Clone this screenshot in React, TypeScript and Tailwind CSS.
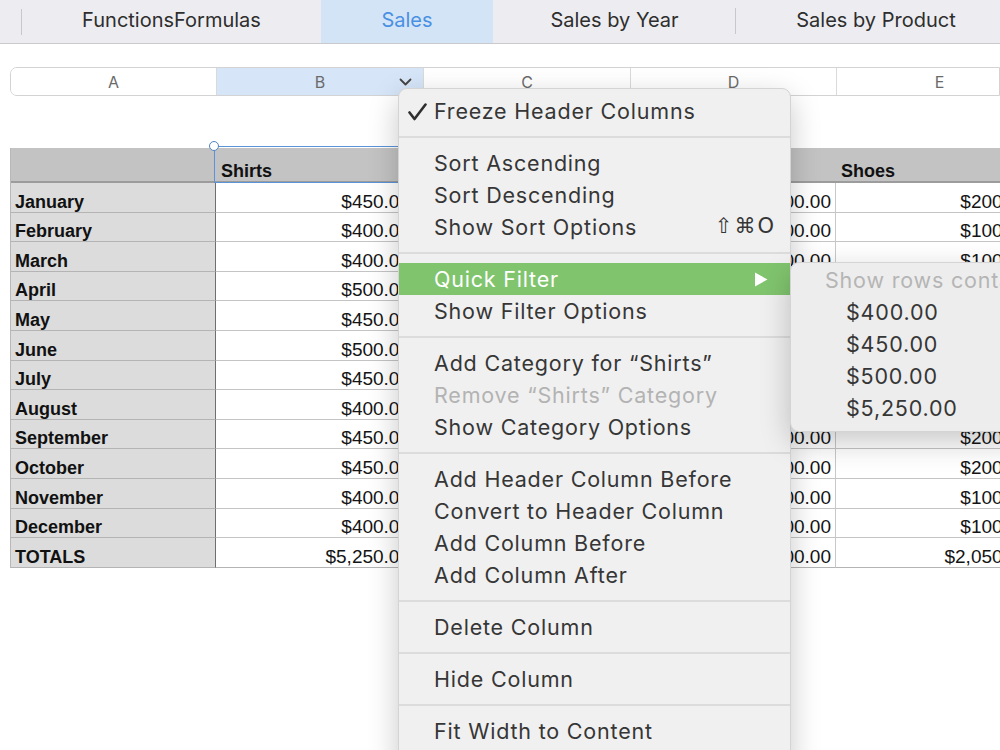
import React from "react";

const months = ["January", "February", "March", "April", "May", "June", "July", "August", "September", "October", "November", "December", "TOTALS"];
const shirts = ["$450.00", "$400.00", "$400.00", "$500.00", "$450.00", "$500.00", "$450.00", "$400.00", "$450.00", "$450.00", "$400.00", "$400.00", "$5,250.00"];
const pants = ["$300.00", "$250.00", "$300.00", "$350.00", "$300.00", "$250.00", "$300.00", "$350.00", "$300.00", "$300.00", "$250.00", "$250.00", "$3,500.00"];
const hats = ["$100.00", "$100.00", "$100.00", "$150.00", "$100.00", "$150.00", "$100.00", "$100.00", "$100.00", "$100.00", "$100.00", "$100.00", "$1,300.00"];
const shoes = ["$200.00", "$100.00", "$100.00", "$200.00", "$150.00", "$250.00", "$300.00", "$150.00", "$200.00", "$200.00", "$100.00", "$100.00", "$2,050.00"];

const tabs = [
    { label: "FunctionsFormulas", w: "w-[299px]" },
    { label: "Sales", w: "w-[172px]", active: true },
    { label: "Sales by Year", w: "w-[243px]", sep: true },
    { label: "Sales by Product", w: "w-[280px]" },
];

type Entry = { label?: string; sep?: boolean; check?: boolean; shortcut?: string; disabled?: boolean; active?: boolean; submenu?: boolean };

const menu: Entry[] = [
    { label: "Freeze Header Columns", check: true },
    { sep: true },
    { label: "Sort Ascending" },
    { label: "Sort Descending" },
    { label: "Show Sort Options", shortcut: "⇧⌘O" },
    { sep: true },
    { label: "Quick Filter", active: true, submenu: true },
    { label: "Show Filter Options" },
    { sep: true },
    { label: "Add Category for “Shirts”" },
    { label: "Remove “Shirts” Category", disabled: true },
    { label: "Show Category Options" },
    { sep: true },
    { label: "Add Header Column Before" },
    { label: "Convert to Header Column" },
    { label: "Add Column Before" },
    { label: "Add Column After" },
    { sep: true },
    { label: "Delete Column" },
    { sep: true },
    { label: "Hide Column" },
    { sep: true },
    { label: "Fit Width to Content" },
];

const cols = [
    { w: "w-[206px]", letter: "A" },
    { w: "w-[207px]", letter: "B", selected: true },
    { w: "w-[207px]", letter: "C" },
    { w: "w-[206px]", letter: "D" },
    { w: "w-[206px]", letter: "E" },
];

function ValueCell({ v, last, pr }: { v: string; last?: boolean; pr: string }) {
    return (
        <div className={`h-[29.6px] flex items-end justify-end ${pr} bg-white border-b ${last ? "border-[#b4b4b4]" : "border-[#c4c4c4]"} border-r border-r-[#c8c8c8] text-[19px] text-[#141414] leading-none`}>
            <span className="pb-[1px]">{v}</span>
        </div>
    );
}

function HeadCell({ label }: { label: string }) {
    return (
        <div className="h-[35px] bg-[#c3c3c3] border-b-2 border-[#9c9c9c] flex items-end pl-[5px] pb-[1px] text-[18px] font-bold text-[#111] leading-none">
            {label}
        </div>
    );
}

export default function App() {
    return (
        <div className="relative w-[1000px] h-[750px] overflow-hidden bg-white" style={{ fontFamily: "Inter, 'Liberation Sans', sans-serif" }}>
            {/* sheet tabs */}
            <div className="flex h-[44px] bg-[#ededf1] border-b border-[#c9c9ce]">
                <div className="w-[22px] shrink-0 flex items-center justify-end">
                    <div className="w-px h-[26px] bg-[#c7c7cc]" />
                </div>
                {tabs.map((t) => (
                    <div key={t.label} className={`${t.w} shrink-0 relative flex items-center justify-center pb-[3px] text-[20px] ${t.active ? "bg-[#d4e4f7] text-[#4a90e2]" : "text-[#2e2e2e]"}`}>
                        {t.label}
                        {t.sep && <div className="absolute right-0 top-[8px] w-px h-[26px] bg-[#c7c7cc]" />}
                    </div>
                ))}
            </div>

            {/* column letters */}
            <div className="mt-[23px] ml-[10px] flex h-[29px] border border-[#d3d3d3] rounded-l-[7px] overflow-hidden">
                {cols.map((c) => (
                    <div key={c.letter} className={`${c.w} shrink-0 relative flex items-center justify-center text-[16px] text-[#6a6a6a] border-r border-[#dadada] ${c.selected ? "bg-[#d6e5f8]" : "bg-white"}`}>
                        {c.letter}
                        {c.selected && (
                            <svg className="absolute right-[11px] top-[10px]" width="13" height="8" viewBox="0 0 13 8">
                                <path d="M1.5 1.5 L6.5 6.5 L11.5 1.5" fill="none" stroke="#444" strokeWidth="1.8" strokeLinecap="round" strokeLinejoin="round" />
                            </svg>
                        )}
                    </div>
                ))}
            </div>

            {/* table */}
            <div className="mt-[52px] ml-[10px] flex" style={{ fontFamily: "'Liberation Sans', Arial, sans-serif" }}>
                <div className="w-[206px] shrink-0 border-l border-[#b8b8b8]">
                    <div className="h-[35px] bg-[#c3c3c3] border-b-2 border-[#9c9c9c]" />
                    {months.map((m) => (
                        <div key={m} className="h-[29.6px] flex items-end pl-[4px] bg-[#dcdcdc] border-b border-[#b4b4b4] border-r border-r-[#6f6f6f] text-[18px] font-bold text-[#111] leading-none">
                            <span className="pb-[1px]">{m}</span>
                        </div>
                    ))}
                </div>
                <div className="w-[207px] shrink-0 relative">
                    <HeadCell label="Shirts" />
                    {shirts.map((v, i) => <ValueCell key={i} v={v} pr="pr-[12px]" last={i === 12} />)}
                    <div className="absolute left-[-2px] top-[-2px] w-[210px] h-[37px] border-[1.5px] border-[#5b93d6]" />
                    <div className="absolute left-[-7px] top-[-7px] w-[10px] h-[10px] rounded-full bg-white border-[1.5px] border-[#4f82c0]" />
                </div>
                <div className="w-[207px] shrink-0">
                    <HeadCell label="Pants" />
                    {pants.map((v, i) => <ValueCell key={i} v={v} pr="pr-[12px]" last={i === 12} />)}
                </div>
                <div className="w-[206px] shrink-0">
                    <HeadCell label="Hats" />
                    {hats.map((v, i) => <ValueCell key={i} v={v} pr="pr-[4px]" last={i === 12} />)}
                </div>
                <div className="w-[206px] shrink-0">
                    <HeadCell label="Shoes" />
                    {shoes.map((v, i) => <ValueCell key={i} v={v} pr="pr-[12px]" last={i === 12} />)}
                </div>
            </div>

            {/* column menu */}
            <div className="absolute left-[398px] top-[88px] w-[393px] h-[680px] pt-[6px] bg-[#f0f0f0] border border-[#d4d4d4] rounded-[9px] shadow-[0_10px_30px_rgba(0,0,0,0.22)] text-[21.5px] tracking-[0.8px] text-[#363636]">
                {menu.map((e, i) =>
                    e.sep ? (
                        <div key={i} className="h-[20px] flex items-center">
                            <div className="w-full h-[2px] bg-[#dcdcdc]" />
                        </div>
                    ) : (
                        <div key={i} className={`h-[32px] relative flex items-center pl-[35px] pr-[14px] ${e.active ? "bg-[#80c46e] text-white" : e.disabled ? "text-[#b3b3b3]" : ""}`}>
                            {e.check && (
                                <svg className="absolute left-[9px] top-[8px]" width="19" height="18" viewBox="0 0 19 18">
                                    <path d="M1.5 9.5 L6.5 16 L17.5 1.5" fill="none" stroke="#2f2f2f" strokeWidth="2.6" strokeLinecap="round" strokeLinejoin="round" />
                                </svg>
                            )}
                            <span className="flex-1">{e.label}</span>
                            {e.shortcut && <span className="text-[21px] tracking-[2px]" style={{ fontFamily: "'DejaVu Sans', sans-serif" }}>{e.shortcut}</span>}
                            {e.submenu && (
                                <svg className="mr-[8px]" width="14" height="15" viewBox="0 0 14 15">
                                    <path d="M1 0.5 L13.5 7.5 L1 14.5 Z" fill="#fff" />
                                </svg>
                            )}
                        </div>
                    )
                )}
            </div>

            {/* quick filter submenu */}
            <div className="absolute left-[790px] top-[262px] w-[240px] h-[170px] pt-[1px] bg-[#ededed] border border-[#d4d4d4] rounded-[9px] shadow-[0_10px_30px_rgba(0,0,0,0.22)] text-[21.5px] tracking-[0.8px] text-[#363636]">
                <div className="h-[32px] flex items-center pl-[34px] text-[#b5b5b5] whitespace-nowrap">Show rows containing:</div>
                {["$400.00", "$450.00", "$500.00", "$5,250.00"].map((v) => (
                    <div key={v} className="h-[32px] flex items-center pl-[55px]">{v}</div>
                ))}
            </div>
        </div>
    );
}
